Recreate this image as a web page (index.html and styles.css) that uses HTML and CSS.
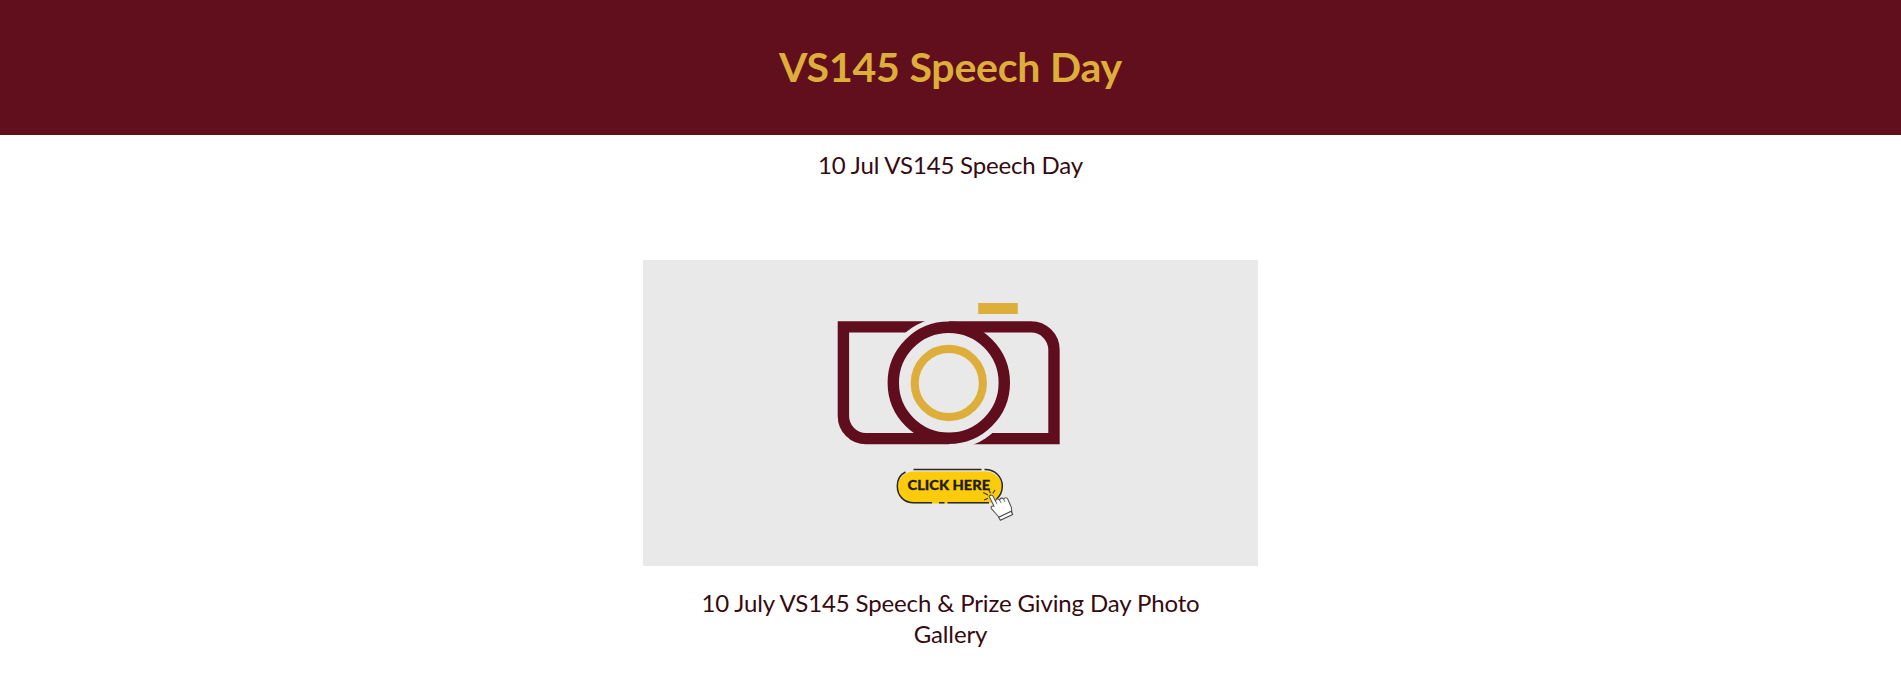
FILE: index.html
```html
<!DOCTYPE html>
<html lang="en">
<head>
<meta charset="utf-8">
<title>VS145 Speech Day</title>
<link rel="stylesheet" href="styles.css">
</head>
<body>
<header class="banner"><h1 class="banner-title">VS145 Speech Day</h1></header>
<main class="content">
  <p class="subtitle">10 Jul VS145 Speech Day</p>
  <figure class="gallery">
    <svg class="gallery-image" viewBox="0 0 615 306" role="img" aria-label="Camera, click here">
      <rect width="615" height="306" fill="#e9e9e9"/>
      <!-- camera body -->
      <g fill="none" stroke="#600e1d" stroke-width="11.4">
        <path d="M290 66.9H200.4V120M411 120V178.6H322"/>
        <circle cx="305.8" cy="123" r="66.3" fill="#e9e9e9" stroke="none"/>
        <path d="M200.4 120V156a22.6 22.6 0 0 0 22.6 22.6H306M306 66.9H388a23 23 0 0 1 23 23V120"/>
        <circle cx="305.8" cy="122.8" r="55.5" fill="#e9e9e9"/>
      </g>
      <circle cx="305.8" cy="123" r="34.1" fill="none" stroke="#deae3b" stroke-width="8.1"/>
      <rect x="335.2" y="43" width="39.6" height="11" fill="#deae3b"/>
      <!-- button -->
      <rect x="254.5" y="211.5" width="104.5" height="32" rx="16" fill="#fccb0c"/>
      <g fill="none" stroke="#292929" stroke-width="1.5">
        <path d="M270.5 209.4H338.5"/>
        <path d="M341.5 209.4C352 209 359.3 217 359.3 226C359.3 231 357 236 353.5 239"/>
        <path d="M262.5 212C256.5 215 254.3 220 254.3 226C254.3 236 261 242.8 271 242.8H289M296 242.8H301.5M304.5 242.8H346"/>
      </g>
      <text class="button-label" x="264.6" y="230.4" textLength="82.5" lengthAdjust="spacingAndGlyphs">CLICK HERE</text>
      <!-- pointer -->
      <path d="M340.2 232.6L345 235M341 240L345 238.3M345.5 229L347.5 233.2M352 230L349.8 233.5" stroke="#3d3510" stroke-width="1.1"/>
      <path d="M346.2 236.2C347.8 234.2 349.8 235.2 350.6 237.2L352.6 241.2C352.9 238.7 355.2 238.3 356.6 240C357.1 237.9 359.4 237.4 360.7 239.2C361.6 237.3 364 237.4 364.8 239.3L368.4 247.5L368.8 252.2L356.2 257.5L352.8 253.5L348.6 248.8C347.3 247 349 245.3 351 246.3Z" fill="#fff" stroke="#555" stroke-width="1.1" stroke-linejoin="round"/>
      <path d="M355.7 257.3L368.2 251.2L369.7 254.5L357.4 260.3Z" fill="#fff" stroke="#444" stroke-width="1.1" stroke-linejoin="round"/>
      <path d="M352.6 241.2L354 244.3M356.6 240L358 243M360.7 239.2L362 242" stroke="#555" stroke-width=".8"/>
    </svg>
    <figcaption class="caption">10 July VS145 Speech &amp; Prize Giving Day Photo Gallery</figcaption>
  </figure>
</main>
</body>
</html>
```
FILE: styles.css
```css
body {
  margin: 0;
  background: #fff;
  color: #350b10;
  font-family: Lato, sans-serif;
  overflow: hidden;
}
.banner {
  height: 133px;
  padding-bottom: 2px;
  display: flex;
  justify-content: center;
  align-items: center;
  background: #620f1d;
}
.banner-title {
  margin: 0;
  font-size: 41px;
  line-height: 50px;
  font-weight: 700;
  letter-spacing: -0.2px;
  color: #deae3b;
}
.content {
  display: flex;
  flex-direction: column;
  align-items: center;
}
.subtitle {
  margin: 14px 0 0;
  font-size: 24px;
  letter-spacing: -0.17px;
  line-height: 32px;
}
.gallery {
  width: 615px;
  margin: 79px 0 0;
}
.gallery-image {
  display: block;
  width: 615px;
  height: 306px;
}
.button-label {
  font-size: 14px;
  font-weight: 900;
  fill: #1f1d12;
  stroke: #1f1d12;
  stroke-width: 0.3px;
}
.caption {
  margin: 21px 50px 0;
  font-size: 24px;
  letter-spacing: -0.13px;
  line-height: 31px;
  text-align: center;
}
```
